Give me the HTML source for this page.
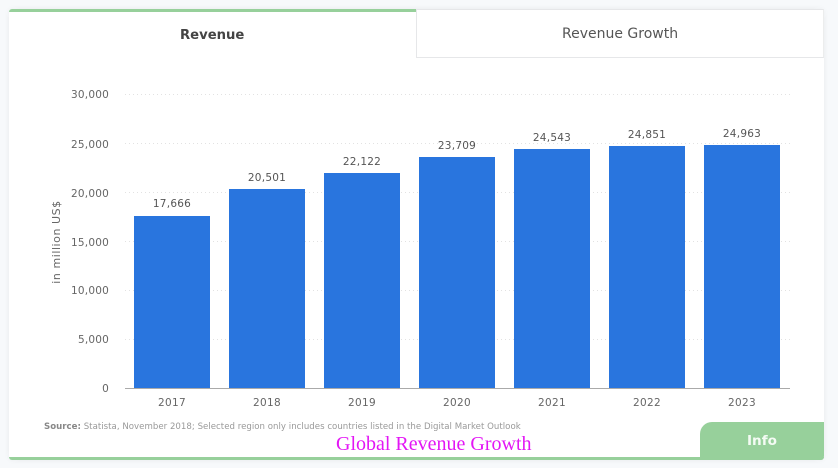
<!DOCTYPE html>
<html>
<head>
<meta charset="utf-8">
<style>
html,body{margin:0;padding:0;width:838px;height:468px;overflow:hidden;background:#f7f9fb;}
*{box-sizing:border-box;}
.t{position:absolute;white-space:nowrap;font-family:"DejaVu Sans","Liberation Sans",sans-serif;color:#666;line-height:14px;}
#card{position:absolute;left:9px;top:9px;width:815px;height:451px;background:#fff;border-radius:4px;box-shadow:0 0 6px rgba(0,0,0,.06);}
#top{position:absolute;left:9px;top:9px;width:408px;height:3px;background:#97d09b;border-radius:3px 0 0 0;}
#bot{position:absolute;left:9px;top:457px;width:815px;height:3px;background:#97d09b;border-radius:0 0 4px 4px;}
#tab{position:absolute;left:416px;top:9px;width:408px;height:49px;background:#fff;border:1px solid #e6e7e9;border-right-color:#eceded;}
.g{position:absolute;left:125px;width:666px;height:1px;background-image:linear-gradient(to right,#e2e2e2 1px,transparent 1px);background-size:4px 1px;}
.b{position:absolute;width:76px;background:#2975de;}
.y{text-align:right;left:60px;width:49px;font-size:10.5px;letter-spacing:.2px;}
.v{text-align:center;width:76px;font-size:10.5px;letter-spacing:.25px;color:#555;}
.x{text-align:center;width:76px;font-size:10.5px;letter-spacing:.35px;top:396px;}
#info{position:absolute;left:700px;top:422px;width:124px;height:38px;background:#97d09b;border-radius:12px 0 4px 0;}
</style>
</head>
<body>
<div id="card"></div>
<div id="top"></div>
<div id="bot"></div>
<div id="tab"></div>

<div class="t" style="left:180px;top:28px;font-weight:bold;font-size:13.2px;color:#444;line-height:16px;">Revenue</div>
<div class="t" style="left:562px;top:26px;font-size:14px;color:#555;line-height:16px;">Revenue Growth</div>

<div class="g" style="top:94px"></div>
<div class="g" style="top:143px"></div>
<div class="g" style="top:192px"></div>
<div class="g" style="top:241px"></div>
<div class="g" style="top:290px"></div>
<div class="g" style="top:339px"></div>

<div class="t y" style="top:88px">30,000</div>
<div class="t y" style="top:138px">25,000</div>
<div class="t y" style="top:187px">20,000</div>
<div class="t y" style="top:236px">15,000</div>
<div class="t y" style="top:284px">10,000</div>
<div class="t y" style="top:333px">5,000</div>
<div class="t y" style="top:382px">0</div>

<div class="t" style="left:57px;top:242px;font-size:11px;letter-spacing:.55px;transform:translate(-50%,-50%) rotate(-90deg);">in million US$</div>

<div class="b" style="left:134px;top:216px;height:172px"></div>
<div class="b" style="left:229px;top:189px;height:199px"></div>
<div class="b" style="left:324px;top:173px;height:215px"></div>
<div class="b" style="left:419px;top:157px;height:231px"></div>
<div class="b" style="left:514px;top:149px;height:239px"></div>
<div class="b" style="left:609px;top:146px;height:242px"></div>
<div class="b" style="left:704px;top:145px;height:243px"></div>

<div style="position:absolute;left:125px;top:388px;width:665px;height:1px;background:#aaa;"></div>

<div class="t v" style="left:134px;top:197px">17,666</div>
<div class="t v" style="left:229px;top:171px">20,501</div>
<div class="t v" style="left:324px;top:155px">22,122</div>
<div class="t v" style="left:419px;top:139px">23,709</div>
<div class="t v" style="left:514px;top:131px">24,543</div>
<div class="t v" style="left:609px;top:128px">24,851</div>
<div class="t v" style="left:704px;top:127px">24,963</div>

<div class="t x" style="left:134px">2017</div>
<div class="t x" style="left:229px">2018</div>
<div class="t x" style="left:324px">2019</div>
<div class="t x" style="left:419px">2020</div>
<div class="t x" style="left:514px">2021</div>
<div class="t x" style="left:609px">2022</div>
<div class="t x" style="left:704px">2023</div>

<div class="t" style="left:44px;top:420px;font-size:8.6px;letter-spacing:.02px;color:#999;"><b style="color:#888">Source:</b> Statista, November 2018; Selected region only includes countries listed in the Digital Market Outlook</div>

<div class="t" style="left:336px;top:432px;font-family:'Liberation Serif',serif;font-size:20px;line-height:24px;color:#e316f5;">Global Revenue Growth</div>

<div id="info"></div>
<div class="t" style="left:747px;top:432px;font-size:13.6px;font-weight:bold;color:#f4fbf4;line-height:18px;">Info</div>
</body>
</html>
